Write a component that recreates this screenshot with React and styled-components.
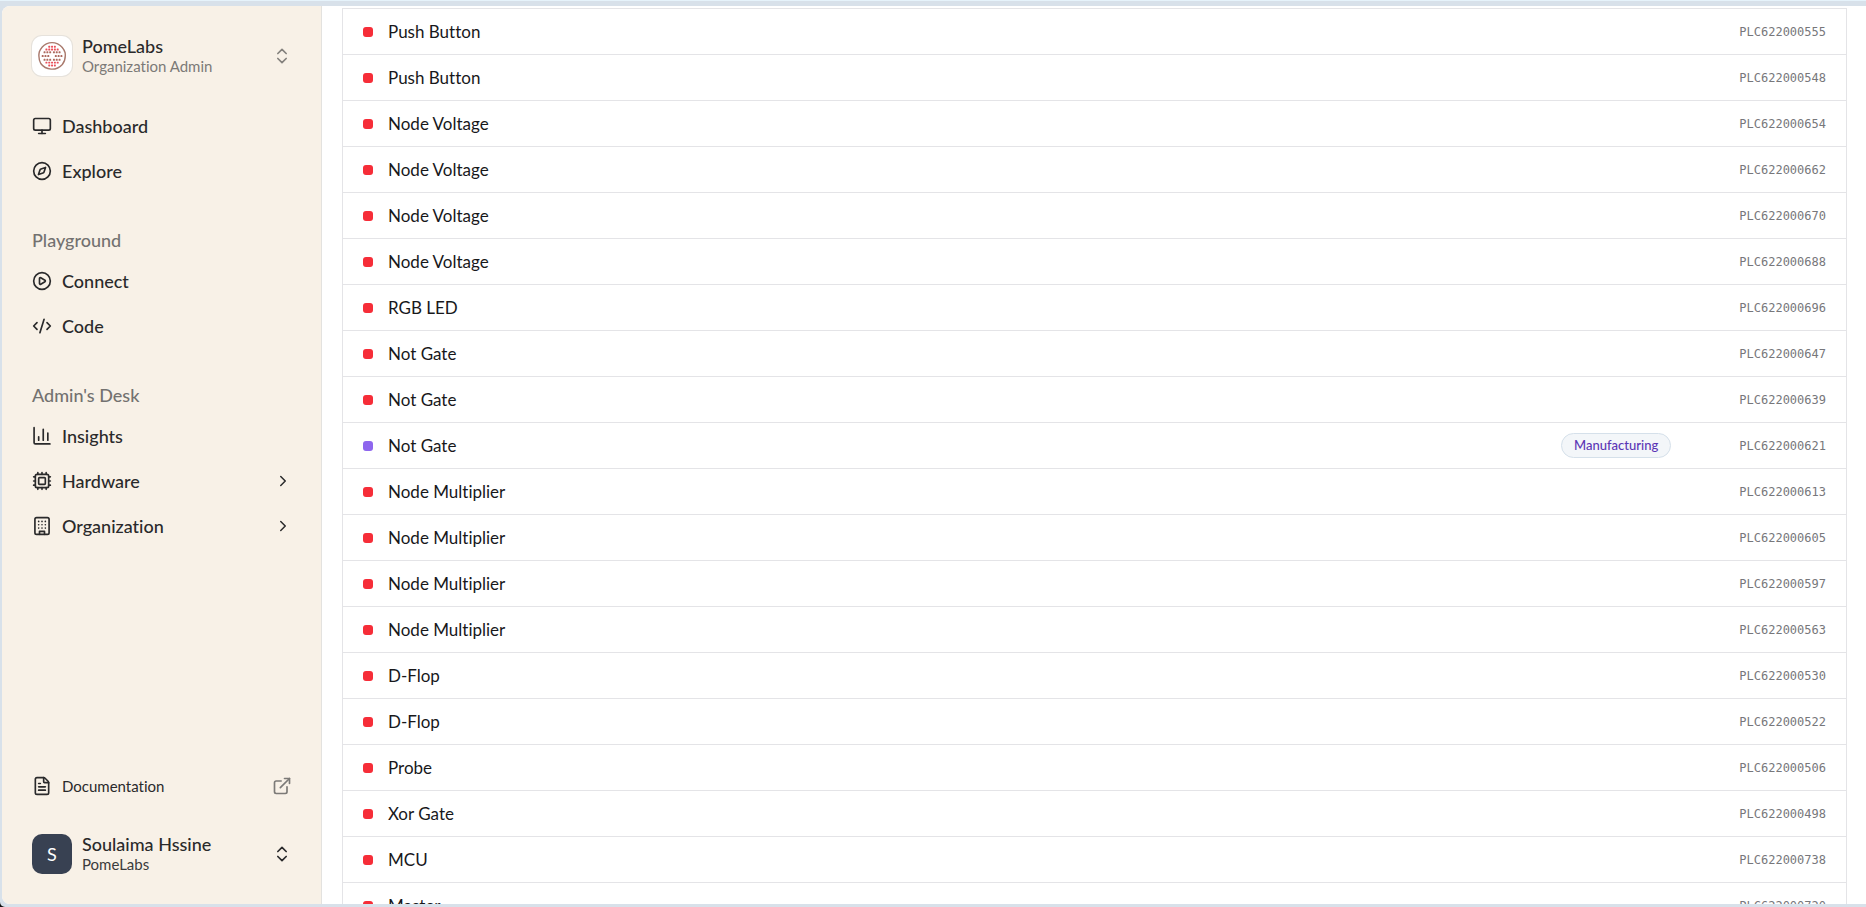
import React from "react";
import styled, { createGlobalStyle } from "styled-components";
import {
  Monitor,
  Compass,
  CirclePlay,
  CodeXml,
  Cpu,
  ChevronsUpDown,
  ChevronRight,
  ExternalLink,
  FileText
} from "lucide-react";

const modules = [
  { name: "Push Button", serial: "PLC622000555" },
  { name: "Push Button", serial: "PLC622000548" },
  { name: "Node Voltage", serial: "PLC622000654" },
  { name: "Node Voltage", serial: "PLC622000662" },
  { name: "Node Voltage", serial: "PLC622000670" },
  { name: "Node Voltage", serial: "PLC622000688" },
  { name: "RGB LED", serial: "PLC622000696" },
  { name: "Not Gate", serial: "PLC622000647" },
  { name: "Not Gate", serial: "PLC622000639" },
  { name: "Not Gate", serial: "PLC622000621", status: "Manufacturing" },
  { name: "Node Multiplier", serial: "PLC622000613" },
  { name: "Node Multiplier", serial: "PLC622000605" },
  { name: "Node Multiplier", serial: "PLC622000597" },
  { name: "Node Multiplier", serial: "PLC622000563" },
  { name: "D-Flop", serial: "PLC622000530" },
  { name: "D-Flop", serial: "PLC622000522" },
  { name: "Probe", serial: "PLC622000506" },
  { name: "Xor Gate", serial: "PLC622000498" },
  { name: "MCU", serial: "PLC622000738" },
  { name: "Master", serial: "PLC622000720" }
];

// seeds of the pomegranate, row by row
const seedRows = [
  { y: 6, xs: [13, 16, 19] },
  { y: 9, xs: [10, 13, 16, 19, 22] },
  { y: 12, xs: [8, 11, 14, 18, 21, 24] },
  { y: 16, xs: [6, 9, 12, 20, 23, 26] },
  { y: 20, xs: [8, 11, 14, 18, 21, 24] },
  { y: 23, xs: [10, 13, 16, 19, 22] },
  { y: 26, xs: [13, 16, 19] }
];

const PomeLogo = () => (
  <svg width="30" height="30" viewBox="0 0 32 32" aria-hidden="true">
    <path
      d="M10 3Q16 .500 22 3Q28 6 30 12.500Q31 20 27 25Q22 30.500 15 30Q8 29.500 4 24Q1 18 2.500 11.500Q5 5.500 10 3Z"
      fill="none"
      stroke="#a9796c"
      strokeWidth="1.500"
    />
    {seedRows.map(({ y, xs }) =>
      xs.map(x => (
        <rect
          key={`${x}-${y}`}
          x={x - 1}
          y={y - 1}
          width="2.100"
          height="2.100"
          rx="0.600"
          fill={y < 10 || y > 22 ? "#ea4f58" : "#ad6a5f"}
        />
      ))
    )}
  </svg>
);

const BuildingIcon = () => (
  <svg
    width="20"
    height="20"
    viewBox="0 0 24 24"
    fill="none"
    stroke="currentColor"
    strokeWidth="2"
    strokeLinecap="round"
    strokeLinejoin="round"
    aria-hidden="true"
  >
    <rect x="3.500" y="2" width="17" height="20" rx="2" />
    <path d="M9 22v-3.500h6V22" />
    <path d="M8 6.500h.01M12 6.500h.01M16 6.500h.01M8 10.500h.01M12 10.500h.01M16 10.500h.01M8 14.500h.01M12 14.500h.01M16 14.500h.01" />
  </svg>
);

const InsightsIcon = () => (
  <svg
    width="20"
    height="20"
    viewBox="0 0 24 24"
    fill="none"
    stroke="currentColor"
    strokeWidth="2"
    strokeLinecap="round"
    strokeLinejoin="round"
    aria-hidden="true"
  >
    <path d="M2.500 2v18a1.500 1.500 0 0 0 1.500 1.500h17.500" />
    <path d="M8 17v-4M13.500 17V4M19 17V8.500" />
  </svg>
);

const mainLinks = [
  { label: "Dashboard", icon: <Monitor size={20} /> },
  { label: "Explore", icon: <Compass size={20} /> }
];

const playgroundLinks = [
  { label: "Connect", icon: <CirclePlay size={20} /> },
  { label: "Code", icon: <CodeXml size={20} /> }
];

const adminLinks = [
  { label: "Insights", icon: <InsightsIcon /> },
  { label: "Hardware", icon: <Cpu size={20} />, nested: true },
  { label: "Organization", icon: <BuildingIcon />, nested: true }
];

const NavGroup = ({ title, links }) => (
  <Group>
    {title && <GroupTitle>{title}</GroupTitle>}
    {links.map(({ label, icon, nested }) => (
      <NavLink key={label} href="#">
        {icon}
        <Grow>{label}</Grow>
        {nested && <ChevronRight size={18} />}
      </NavLink>
    ))}
  </Group>
);

const App = () => (
  <Shell>
    <GlobalStyle />
    <Window>
      <Sidebar>
        <AccountButton type="button">
          <OrgLogo>
            <PomeLogo />
          </OrgLogo>
          <AccountText>
            <AccountName>PomeLabs</AccountName>
            <AccountNote $muted>Organization Admin</AccountNote>
          </AccountText>
          <ChevronsUpDown size={20} color="#85827e" />
        </AccountButton>
        <Nav>
          <NavGroup links={mainLinks} />
          <NavGroup title="Playground" links={playgroundLinks} />
          <NavGroup title="Admin's Desk" links={adminLinks} />
        </Nav>
        <DocsLink href="#">
          <FileText size={20} />
          <Grow>Documentation</Grow>
          <ExternalLink size={20} color="#7c7a77" />
        </DocsLink>
        <AccountButton type="button">
          <Avatar>S</Avatar>
          <AccountText>
            <AccountName>Soulaima Hssine</AccountName>
            <AccountNote>PomeLabs</AccountNote>
          </AccountText>
          <ChevronsUpDown size={20} />
        </AccountButton>
      </Sidebar>
      <Main>
        <Table>
          <tbody>
            {modules.map(({ name, serial, status }) => (
              <Row key={serial}>
                <NameCell>
                  <NameWrap>
                    <Dot $color={status ? "#8e66ee" : "#f62d38"} />
                    {name}
                  </NameWrap>
                </NameCell>
                <StatusCell>{status && <Badge>{status}</Badge>}</StatusCell>
                <SerialCell>{serial}</SerialCell>
              </Row>
            ))}
          </tbody>
        </Table>
      </Main>
    </Window>
  </Shell>
);

const GlobalStyle = createGlobalStyle`
  *, *::before, *::after {
    box-sizing: border-box;
  }

  body {
    margin: 0;
    overflow: hidden;
    font-family: Lato, "Liberation Sans", sans-serif;
    font-size: 17px;
    font-variant-ligatures: none;
    color: #2a2a2b;
    background: #111;
  }

  svg {
    flex-shrink: 0;
  }
`;

const Shell = styled.div`
  height: 100vh;
  padding: 5px 0 3px 2px;
  border-top: 1px solid #e6f3fb;
  border-bottom-left-radius: 5px;
  background: #d8e1ea;
`;

const Window = styled.div`
  display: flex;
  height: 100%;
  overflow: hidden;
  border-radius: 8px 0 0 8px;
  background: #fff;
`;

const Sidebar = styled.aside`
  display: flex;
  flex-direction: column;
  flex: 0 0 320px;
  padding: 30px 29px 30px 30px;
  border-right: 1px solid #e3e2df;
  background: #f8f1e7;
`;

const AccountButton = styled.button`
  display: flex;
  align-items: center;
  gap: 10px;
  width: 100%;
  padding: 0;
  border: 0;
  background: none;
  font: inherit;
  color: inherit;
  text-align: left;
`;

const OrgLogo = styled.span`
  display: flex;
  align-items: center;
  justify-content: center;
  width: 40px;
  height: 40px;
  border-radius: 10px;
  background: #fff;
  box-shadow: 0 0 0 1px #e6e2dc;
`;

const Avatar = styled(OrgLogo)`
  background: #384152;
  box-shadow: none;
  color: #fff;
  font-size: 18px;
`;

const AccountText = styled.span`
  display: flex;
  flex-direction: column;
  flex: 1;
`;

const AccountName = styled.span`
  font-size: 18px;
  font-weight: 500;
  line-height: 20px;
`;

const AccountNote = styled.span`
  font-size: 15px;
  line-height: 20px;
  color: ${props => (props.$muted ? "#7c7a77" : "#3b3b3c")};
`;

const Nav = styled.nav`
  display: flex;
  flex-direction: column;
  flex: 1;
  gap: 30px;
  padding-top: 27px;
`;

const Group = styled.div`
  display: flex;
  flex-direction: column;
`;

const GroupTitle = styled.div`
  line-height: 35px;
  font-size: 18px;
  font-weight: 500;
  color: #737170;
`;

const NavLink = styled.a`
  display: flex;
  align-items: center;
  gap: 10px;
  height: 45px;
  color: inherit;
  font-size: 18px;
  font-weight: 500;
  text-decoration: none;
`;

const DocsLink = styled(NavLink)`
  margin-bottom: 26px;
  font-size: 15px;
  font-weight: 400;
`;

const Grow = styled.span`
  flex: 1;
`;

const Main = styled.main`
  flex: 1;
  min-width: 0;
  padding: 2px 19px 0 20px;
`;

const Table = styled.table`
  width: 100%;
  border: 1px solid #e4e4e7;
  border-spacing: 0;
  color: #18181b;
`;

const Row = styled.tr`
  height: 46px;

  & > td {
    padding: 0 20px;
    border-bottom: 1px solid #e4e4e7;
  }
`;

const NameCell = styled.td`
  width: 100%;
`;

const NameWrap = styled.span`
  display: flex;
  align-items: center;
  gap: 15px;
`;

const Dot = styled.span`
  width: 10px;
  height: 10px;
  border-radius: 3px;
  background: ${props => props.$color};
`;

const StatusCell = styled.td`
  white-space: nowrap;
`;

const Badge = styled.span`
  display: inline-block;
  margin-right: 28px;
  padding: 0 12px;
  border: 1px solid #d5e0ea;
  border-radius: 13px;
  background: #f3f6f9;
  color: #5b35b5;
  font-size: 13px;
  font-weight: 500;
  line-height: 23px;
`;

const SerialCell = styled.td`
  font-family: "DejaVu Sans Mono", monospace;
  font-size: 12px;
  color: #77777b;
  text-align: right;
`;

export default App;
